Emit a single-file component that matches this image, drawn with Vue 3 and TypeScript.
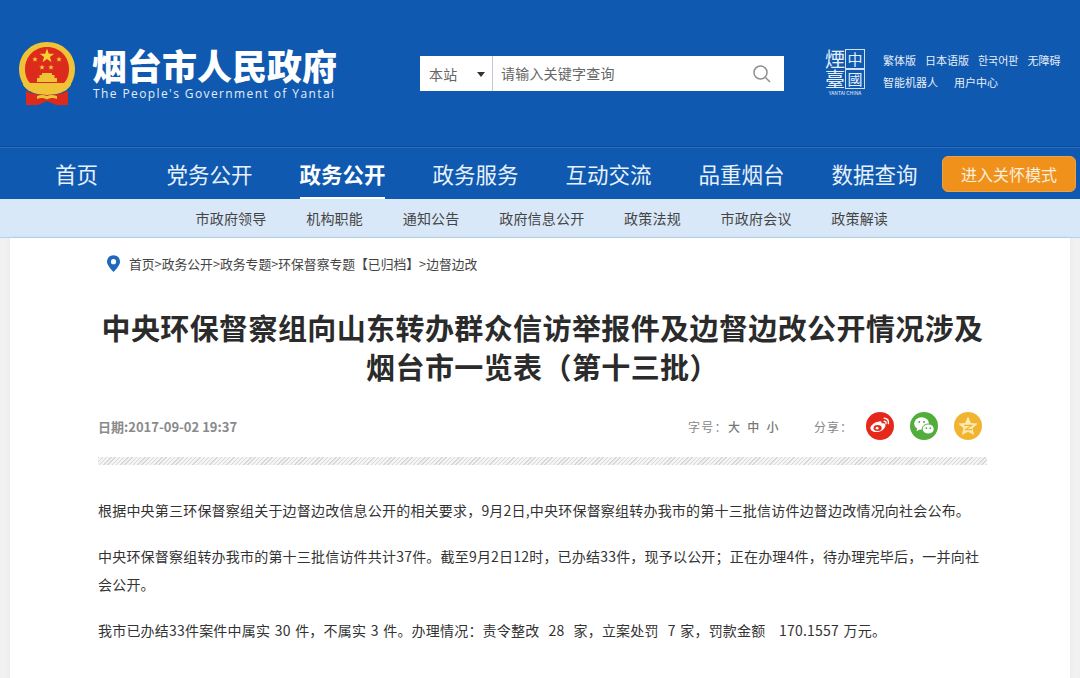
<template>
  <div class="page">
    <header class="top">
      <div class="logo">
        <svg class="emblem" viewBox="0 0 58 65" width="58" height="65">
          <path d="M29 1C13 1 1 13 1 28c0 9 4 17 10 22h36c6-5 10-13 10-22C57 13 45 1 29 1z" fill="#f0c236" />
          <path d="M29 6C16 6 7 16 7 28c0 6 2 11 5 14h34c3-3 5-8 5-14C51 16 42 6 29 6z" fill="#dc2a1d" />
          <path d="M29 7.500l1.800 5.200h5.500l-4.400 3.300 1.600 5.200-4.500-3.100-4.500 3.100 1.600-5.200-4.400-3.300h5.500z" fill="#f6d232" />
          <path d="M17 15.500l.7 2h2.100l-1.700 1.300.6 2-1.700-1.200-1.700 1.200.6-2-1.700-1.300h2.100zM41 15.500l.7 2h2.100l-1.700 1.300.6 2-1.700-1.200-1.700 1.200.6-2-1.700-1.300h2.100zM24 23.500l.7 2h2.100l-1.700 1.300.6 2-1.700-1.200-1.700 1.200.6-2-1.700-1.300h2.100zM33 23.500l.7 2h2.100l-1.700 1.300.6 2-1.700-1.200-1.700 1.200.6-2-1.700-1.300h2.100z" fill="#f6d232" />
          <path d="M24 32h10v2h2.500v3H39v4H19v-4h2.500v-3H24z" fill="#f0c236" />
          <path d="M5 40c6 5 15 7 24 7s18-2 24-7v4c-5 7-14 10-24 10S10 51 5 44z" fill="#f0c236" />
          <path d="M8 50c7 3 14 4 21 4s14-1 21-4v14H38l-9-4-9 4H8z" fill="#dc2a1d" />
          <path d="M19 55c4-1.500 7-1.500 10 0 3-1.500 6-1.500 10 0v3c-4-1.500-7-1-10 .5-3-1.500-6-2-10-.5z" fill="#f0c236" />
        </svg>
        <div class="logo-text">
          <div class="logo-cn">烟台市人民政府</div>
          <div class="logo-en">The People's Government of Yantai</div>
        </div>
      </div>
      <div class="search">
        <div class="scope">本站<i class="caret"></i></div>
        <div class="query">
          <span>请输入关键字查询</span>
          <svg viewBox="0 0 20 20" width="20" height="20" fill="none" stroke="#8f8f8f" stroke-width="1.500">
            <circle cx="8.500" cy="8.500" r="6.500" />
            <path d="M13.500 13.500l4.500 4.500" />
          </svg>
        </div>
      </div>
      <div class="seal">
        <div class="seal-grid">
          <span class="seal-cell">煙</span>
          <span class="seal-cell boxed">中</span>
          <span class="seal-cell">臺</span>
          <span class="seal-cell boxed">國</span>
        </div>
        <div class="seal-en">YANTAI CHINA</div>
      </div>
      <div class="tools">
        <div class="tool-row">
          <a v-for="t in toolsTop" :key="t">{{ t }}</a>
        </div>
        <div class="tool-row second">
          <a v-for="t in toolsBottom" :key="t">{{ t }}</a>
        </div>
      </div>
    </header>

    <nav class="nav">
      <a v-for="n in navItems" :key="n" class="nav-item" :class="{ on: n === '政务公开' }">{{ n }}</a>
      <a class="care">进入关怀模式</a>
    </nav>
    <div class="subnav">
      <a v-for="s in subItems" :key="s">{{ s }}</a>
    </div>

    <main class="card">
      <div class="crumb">
        <svg viewBox="0 0 14 18" width="13" height="17">
          <path d="M7 0C3 0 0 3 0 7c0 4.500 7 11 7 11s7-6.500 7-11c0-4-3-7-7-7z" fill="#1f68bd" />
          <circle cx="7" cy="7" r="2.800" fill="#fff" />
        </svg>
        <span>首页&gt;政务公开&gt;政务专题&gt;环保督察专题【已归档】&gt;边督边改</span>
      </div>
      <h1>中央环保督察组向山东转办群众信访举报件及边督边改公开情况涉及<br />烟台市一览表（第十三批）</h1>
      <div class="meta">
        <span class="date">日期:2017-09-02 19:37</span>
        <span class="font-size">字号：<b>大</b><b>中</b><b>小</b></span>
        <span class="share-label">分享：</span>
        <div class="share">
          <span class="dot weibo">
            <svg viewBox="0 0 20 20" width="24" height="24">
              <path d="M13.500 3.500c2.500 0 4 2 3.500 4.500M13.500 6c1.200 0 1.800 1 1.500 2" fill="none" stroke="#fff" stroke-width="1.200" stroke-linecap="round" />
              <path d="M8.500 6.500c2-1 3.200-.3 2.800 1.400 2.500-.7 3.700.6 3.200 2.200-.6 2.800-3.700 5-7.200 5-3 0-5.300-1.400-5.300-3.500 0-1.700 3.300-4.800 6.500-5.100z" fill="#fff" />
              <ellipse cx="8" cy="11.700" rx="3.400" ry="2.500" fill="#e5281a" />
              <circle cx="7.600" cy="11.800" r="1.200" fill="#fff" />
            </svg>
          </span>
          <span class="dot wechat">
            <svg viewBox="0 0 20 20" width="24" height="24" fill="#fff">
              <ellipse cx="8" cy="8" rx="6.200" ry="5.200" />
              <path d="M4.500 11.500l-.8 2.800 3-1.600z" />
              <ellipse cx="13.500" cy="12.500" rx="5" ry="4.200" stroke="#53ad3c" stroke-width=".8" />
              <circle cx="6" cy="6.600" r=".8" fill="#53ad3c" />
              <circle cx="10" cy="6.600" r=".8" fill="#53ad3c" />
              <circle cx="12" cy="11.800" r=".7" fill="#53ad3c" />
              <circle cx="15.200" cy="11.800" r=".7" fill="#53ad3c" />
            </svg>
          </span>
          <span class="dot star">
            <svg viewBox="0 0 20 20" width="24" height="24">
              <path d="M10 2l2.400 5.400 5.800.6-4.400 3.900 1.300 5.700L10 14.700l-5.100 2.900 1.300-5.700L1.800 8l5.800-.6z" fill="#fbe8b4" />
              <path d="M7 9.500h6l-5 3.500h5.500" fill="none" stroke="#f0b430" stroke-width="1" />
            </svg>
          </span>
        </div>
      </div>
      <div class="hatch"></div>
      <article class="body">
        <p v-for="(p, i) in paragraphs" :key="i">{{ p }}</p>
      </article>
    </main>
  </div>
</template>

<script setup lang="ts">
const toolsTop: string[] = ['繁体版', '日本语版', '한국어판', '无障碍']
const toolsBottom: string[] = ['智能机器人', '用户中心']
const navItems: string[] = ['首页', '党务公开', '政务公开', '政务服务', '互动交流', '品重烟台', '数据查询']
const subItems: string[] = ['市政府领导', '机构职能', '通知公告', '政府信息公开', '政策法规', '市政府会议', '政策解读']
const paragraphs: string[] = [
  '根据中央第三环保督察组关于边督边改信息公开的相关要求，9月2日,中央环保督察组转办我市的第十三批信访件边督边改情况向社会公布。',
  '中央环保督察组转办我市的第十三批信访件共计37件。截至9月2日12时，已办结33件，现予以公开；正在办理4件，待办理完毕后，一并向社会公开。',
  '我市已办结33件案件中属实 30 件，不属实 3 件。办理情况：责令整改  28  家，立案处罚  7 家，罚款金额   170.1557 万元。',
]
</script>

<style>
html,
body {
  margin: 0;
  background: #f1f1f1;
  overflow: hidden;
}
</style>

<style scoped>
.page {
  width: 1080px;
  height: 678px;
  overflow: hidden;
  font-family: "Noto Sans CJK SC", "Liberation Sans", sans-serif;
  color: #333;
}
a {
  color: inherit;
  text-decoration: none;
}

.top {
  height: 147px;
  box-sizing: border-box;
  background: #1059b0;
  border-bottom: 1px solid #0b4c9c;
  display: flex;
  align-items: flex-start;
  color: #fff;
}
.logo {
  display: flex;
  margin: 41px 0 0 18px;
  width: 402px;
}
.emblem {
  flex: none;
}
.logo-text {
  margin-left: 16px;
}
.logo-cn {
  font-size: 35px;
  font-weight: 900;
  line-height: 40px;
  margin-top: 4px;
  white-space: nowrap;
}
.logo-en {
  font-family: "Open Sans", "Liberation Sans", sans-serif;
  font-size: 12px;
  line-height: 16px;
  letter-spacing: 1.400px;
  margin: 1px 0 0 1px;
  color: #e3edf8;
  white-space: nowrap;
}

.search {
  display: flex;
  width: 364px;
  height: 35px;
  margin-top: 56px;
  background: #fff;
  color: #666;
  font-size: 14px;
  letter-spacing: 0.200px;
  flex: none;
}
.scope {
  width: 73px;
  flex: none;
  box-sizing: border-box;
  padding-left: 9px;
  border-right: 1px solid #bfc9d6;
  line-height: 37px;
  position: relative;
}
.caret {
  position: absolute;
  right: 7px;
  top: 16px;
  border: 4px solid transparent;
  border-top: 5px solid #333;
  border-bottom: 0;
}
.query {
  flex: 1;
  display: flex;
  align-items: center;
  justify-content: space-between;
  padding: 0 12px 2px 8px;
}
.query svg {
  margin-top: 2px;
}

.seal {
  width: 40px;
  margin: 49px 0 0 41px;
  flex: none;
  color: #e6eff9;
}
.seal-grid {
  display: grid;
  grid-template-columns: 20px 20px;
  grid-auto-rows: 20px;
  font-size: 20px;
  line-height: 20px;
  font-weight: 400;
  text-align: center;
}
.seal-cell {
  display: block;
  box-sizing: border-box;
  height: 20px;
}
.seal-cell.boxed {
  border: 1px solid #cfe0f2;
  font-size: 15px;
  line-height: 18px;
}
.seal-en {
  font-size: 5px;
  line-height: 6px;
  margin-top: 1px;
  text-align: center;
  white-space: nowrap;
}

.tools {
  margin: 51px 0 0 18px;
  font-size: 11px;
  line-height: 18px;
  color: #e6eff9;
  white-space: nowrap;
}
.tool-row {
  display: flex;
  gap: 9px;
}
.tool-row.second {
  gap: 16px;
  margin-top: 4px;
}

.nav {
  height: 52px;
  box-sizing: border-box;
  background: #1059b0;
  border-top: 1px solid #2a70c0;
  padding-left: 10px;
  display: flex;
  align-items: center;
  position: relative;
}
.nav-item {
  width: 133px;
  height: 100%;
  flex: none;
  text-align: center;
  color: #e8f1fb;
  font-size: 21.500px;
  line-height: 51px;
  position: relative;
}
.nav-item.on {
  color: #fff;
  font-weight: 700;
}
.nav-item.on::after {
  content: "";
  position: absolute;
  left: 24px;
  right: 24px;
  bottom: 0;
  height: 2px;
  background: #fff;
}
.care {
  margin-left: 1px;
  width: 134px;
  height: 36px;
  box-sizing: border-box;
  background: #f0911c;
  border: 1px solid #e9a24a;
  border-radius: 6px;
  color: #fbeedd;
  font-size: 16px;
  line-height: 34px;
  text-align: center;
}

.subnav {
  height: 39px;
  box-sizing: border-box;
  background: #d9e8f8;
  border-bottom: 1px solid #b5d3ee;
  padding-left: 195.500px;
  display: flex;
  gap: 39.700px;
  font-size: 14px;
  letter-spacing: 0.200px;
  line-height: 38px;
  color: #444;
}

.card {
  width: 1060px;
  height: 440px;
  margin-left: 10px;
  box-sizing: border-box;
  background: #fff;
  box-shadow: 0 0 5px rgba(0, 0, 0, 0.05);
  padding: 0 83px 0 88px;
}
.crumb {
  display: flex;
  align-items: center;
  gap: 9px;
  height: 50px;
  margin-left: 9px;
  font-size: 12.800px;
  color: #444;
}
h1 {
  margin: 20px 0 0;
  font-size: 29px;
  line-height: 39px;
  font-weight: 700;
  letter-spacing: 0.400px;
  text-align: center;
  color: #2b2b2b;
}
.meta {
  display: flex;
  align-items: center;
  height: 30px;
  margin-top: 25px;
  font-size: 12px;
  color: #888;
}
.date {
  font-size: 13px;
  font-weight: 700;
  width: 590px;
  color: #8a8a8a;
}
.font-size {
  width: 126px;
  letter-spacing: 1.300px;
}
.font-size b {
  font-weight: 500;
  color: #777;
  margin-right: 6px;
}
.share-label {
  width: 52px;
  letter-spacing: 1px;
}
.share {
  display: flex;
  gap: 16px;
}
.dot {
  width: 28px;
  height: 28px;
  border-radius: 50%;
  display: flex;
  align-items: center;
  justify-content: center;
}
.weibo {
  background: #e5281a;
}
.wechat {
  background: #53ad3c;
}
.star {
  background: #f0b430;
}
.hatch {
  height: 8px;
  margin-top: 16px;
  background: repeating-linear-gradient(135deg, #d8d8d8 0 1px, #f4f4f4 1px 3px);
}
.body {
  margin-top: 31px;
  font-size: 14px;
  letter-spacing: 0.200px;
  word-spacing: 1.200px;
  line-height: 28px;
  color: #333;
}
.body p {
  margin: 0 0 18px;
  white-space: pre-wrap;
}
</style>
